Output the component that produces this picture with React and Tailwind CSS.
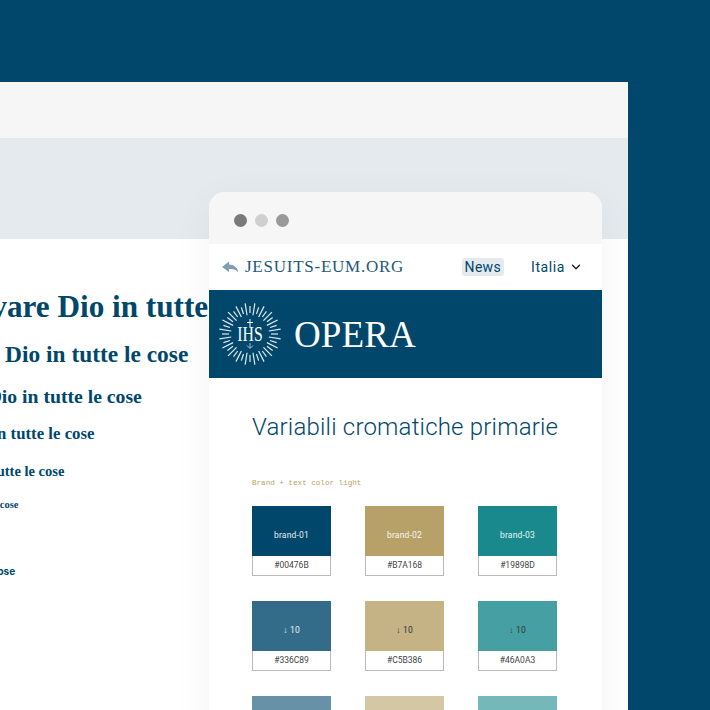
import { ChevronDown } from 'lucide-react';

const headings = [
    { cls: 'text-[31.2px] leading-[36px] -ml-[56px] mb-[15px]' },
    { cls: 'text-[23.4px] leading-[28px] -ml-[80px] mb-[16px]' },
    { cls: 'text-[19.7px] leading-[24px] -ml-[84px] mb-[16px]' },
    { cls: 'text-[16.8px] leading-[20px] -ml-[98px] mb-[18px]' },
    { cls: 'text-[14.5px] leading-[18px] -ml-[102px] mb-[18px]' },
    { cls: "text-[10.5px] leading-[14px] -ml-[102px] mb-[52px]" },
    { cls: "text-[10px] leading-[14px] -ml-[114px] font-['Inter',sans-serif]" },
];

const swatches = [
    { bg: 'bg-[#00476B]', label: 'brand-01', hex: '#00476B', text: 'text-white/90' },
    { bg: 'bg-[#B7A168]', label: 'brand-02', hex: '#B7A168', text: 'text-white/90' },
    { bg: 'bg-[#19898D]', label: 'brand-03', hex: '#19898D', text: 'text-white/90' },
    { bg: 'bg-[#336C89]', label: '↓ 10', hex: '#336C89', text: 'text-white/90' },
    { bg: 'bg-[#C5B386]', label: '↓ 10', hex: '#C5B386', text: 'text-[#333]' },
    { bg: 'bg-[#46A0A3]', label: '↓ 10', hex: '#46A0A3', text: 'text-[#333]' },
    { bg: 'bg-[#6691A6]', label: '↓ 20', hex: '#6691A6', text: 'text-white/90' },
    { bg: 'bg-[#D4C7A4]', label: '↓ 20', hex: '#D4C7A4', text: 'text-[#333]' },
    { bg: 'bg-[#75B8BA]', label: '↓ 20', hex: '#75B8BA', text: 'text-[#333]' },
];

const rays = Array.from({ length: 40 }, (_, i) => i);

function Seal() {
    return (
        <svg width="64" height="64" viewBox="-32 -32 64 64" className="shrink-0">
            {rays.map((i) => {
                const a = (i / 40) * Math.PI * 2;
                const r1 = i % 2 ? 19 : 21;
                const r2 = i % 2 ? 31 : 28;
                return (
                    <line
                        key={i}
                        x1={Math.cos(a) * r1}
                        y1={Math.sin(a) * r1}
                        x2={Math.cos(a) * r2}
                        y2={Math.sin(a) * r2}
                        stroke="#dfeaf0"
                        strokeWidth="1.2"
                    />
                );
            })}
            <text transform="translate(0 7) scale(0.75 1)" textAnchor="middle" fontSize="21" fill="#fff" fontFamily="'Liberation Serif', serif">IHS</text>
            <path d="M0 -15V-7M-3 -11.5H3" stroke="#fff" strokeWidth="1" />
            <path d="M0 9V14M-3 11.5L0 14.5L3 11.5" stroke="#cfdde5" strokeWidth="0.8" fill="none" />
        </svg>
    );
}

export default function App() {
    return (
        <div className="w-[710px] h-[710px] overflow-hidden bg-[#00476B] pt-[82px] pr-[82px] font-['Roboto',sans-serif]">
            <div className="relative h-full bg-white overflow-hidden">
                <div className="h-[56px] bg-[#f6f6f7]" />
                <div className="h-[101px] bg-[#e4eaee]" />

                <div className="pt-[50px] flex flex-col items-start font-['Liberation_Serif',serif] font-bold text-[#00476B] whitespace-nowrap">
                    {headings.map((h, i) => (
                        <div key={i} className={h.cls}>Trovare Dio in tutte le cose</div>
                    ))}
                </div>

                <div className="absolute left-[209px] top-[110px] w-[393px] h-[600px] rounded-t-[16px] bg-white overflow-hidden shadow-[0_10px_40px_rgba(0,0,0,0.05)]">
                    <div className="h-[52px] pt-[4px] bg-[#f6f6f7] flex items-center gap-[8px] pl-[25px]">
                        <span className="w-[13px] h-[13px] rounded-full bg-[#7a7a7a]" />
                        <span className="w-[13px] h-[13px] rounded-full bg-[#cfcfcf]" />
                        <span className="w-[13px] h-[13px] rounded-full bg-[#999999]" />
                    </div>

                    <div className="h-[46px] flex items-center pl-[13px] pr-[19px]">
                        <svg width="17" height="12" viewBox="0 0 17 12" className="shrink-0 mr-[6px]">
                            <path d="M0 6L7 0.5V3.5C12 3.5 15.5 6.5 16.5 11.5C14 8.5 11 7.5 7 8V11Z" fill="#7d9fb2" />
                        </svg>
                        <span className="font-['Liberation_Serif',serif] text-[17px] tracking-[0.75px] text-[#23587a]">JESUITS-EUM.ORG</span>
                        <span className="ml-auto h-[18px] px-[3px] rounded-[3px] bg-[#e4eaee] text-[14px] leading-[18px] text-[#00476B] tracking-[0.3px]">News</span>
                        <span className="ml-[27px] text-[14px] text-[#00476B] tracking-[0.6px]">Italia</span>
                        <ChevronDown className="ml-[4px] w-[14px] h-[14px] text-[#123]" strokeWidth={2.2} />
                    </div>

                    <div className="h-[88px] bg-[#00476B] flex items-center pl-[9px]">
                        <Seal />
                        <span className="ml-[12px] mt-[1px] font-['Liberation_Serif',serif] text-[37px] tracking-[0.1px] text-white">OPERA</span>
                    </div>

                    <div className="pl-[43px] pt-[33px]">
                        <h1 className="text-[24px] leading-[32px] font-light text-[#00476B] tracking-[0.2px]">Variabili cromatiche primarie</h1>
                        <p className="mt-[34px] font-['Liberation_Mono',monospace] text-[7.6px] leading-[12px] text-[#B7A168]">Brand + text color light</p>
                        <div className="mt-[17px] grid grid-cols-[79px_79px_79px] gap-x-[34px] gap-y-[25px]">
                            {swatches.map((s) => (
                                <div key={s.hex}>
                                    <div className={`h-[50px] pt-[9px] flex items-center justify-center text-[8.5px] tracking-[0.2px] ${s.bg} ${s.text}`}>{s.label}</div>
                                    <div className="h-[20px] flex items-center justify-center border border-t-0 border-[#bbbbbb] text-[8.5px] text-[#444]">{s.hex}</div>
                                </div>
                            ))}
                        </div>
                    </div>
                </div>
            </div>
        </div>
    );
}
